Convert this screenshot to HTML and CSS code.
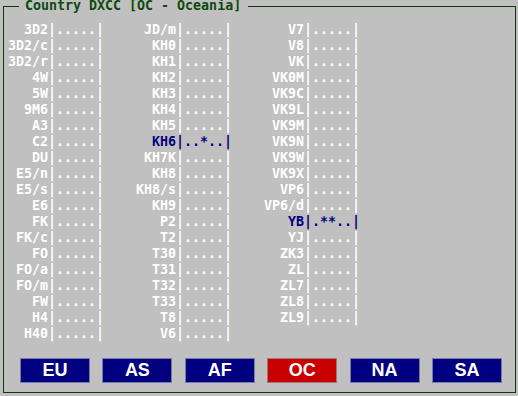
FILE: index.html
```html
<!DOCTYPE html>
<html>
<head>
<meta charset="utf-8">
<link rel="stylesheet" href="styles.css">
</head>
<body>
<fieldset class="panel">
  <legend class="title">Country DXCC [OC - Oceania]</legend>
  <div class="grid">
    <div class="col first">
      <div class="row"><span class="call">3D2</span><span class="bars">|.....|</span></div>
      <div class="row"><span class="call">3D2/c</span><span class="bars">|.....|</span></div>
      <div class="row"><span class="call">3D2/r</span><span class="bars">|.....|</span></div>
      <div class="row"><span class="call">4W</span><span class="bars">|.....|</span></div>
      <div class="row"><span class="call">5W</span><span class="bars">|.....|</span></div>
      <div class="row"><span class="call">9M6</span><span class="bars">|.....|</span></div>
      <div class="row"><span class="call">A3</span><span class="bars">|.....|</span></div>
      <div class="row"><span class="call">C2</span><span class="bars">|.....|</span></div>
      <div class="row"><span class="call">DU</span><span class="bars">|.....|</span></div>
      <div class="row"><span class="call">E5/n</span><span class="bars">|.....|</span></div>
      <div class="row"><span class="call">E5/s</span><span class="bars">|.....|</span></div>
      <div class="row"><span class="call">E6</span><span class="bars">|.....|</span></div>
      <div class="row"><span class="call">FK</span><span class="bars">|.....|</span></div>
      <div class="row"><span class="call">FK/c</span><span class="bars">|.....|</span></div>
      <div class="row"><span class="call">FO</span><span class="bars">|.....|</span></div>
      <div class="row"><span class="call">FO/a</span><span class="bars">|.....|</span></div>
      <div class="row"><span class="call">FO/m</span><span class="bars">|.....|</span></div>
      <div class="row"><span class="call">FW</span><span class="bars">|.....|</span></div>
      <div class="row"><span class="call">H4</span><span class="bars">|.....|</span></div>
      <div class="row"><span class="call">H40</span><span class="bars">|.....|</span></div>
    </div>
    <div class="col">
      <div class="row"><span class="call">JD/m</span><span class="bars">|.....|</span></div>
      <div class="row"><span class="call">KH0</span><span class="bars">|.....|</span></div>
      <div class="row"><span class="call">KH1</span><span class="bars">|.....|</span></div>
      <div class="row"><span class="call">KH2</span><span class="bars">|.....|</span></div>
      <div class="row"><span class="call">KH3</span><span class="bars">|.....|</span></div>
      <div class="row"><span class="call">KH4</span><span class="bars">|.....|</span></div>
      <div class="row"><span class="call">KH5</span><span class="bars">|.....|</span></div>
      <div class="row hit"><span class="call">KH6</span><span class="bars">|..*..|</span></div>
      <div class="row"><span class="call">KH7K</span><span class="bars">|.....|</span></div>
      <div class="row"><span class="call">KH8</span><span class="bars">|.....|</span></div>
      <div class="row"><span class="call">KH8/s</span><span class="bars">|.....|</span></div>
      <div class="row"><span class="call">KH9</span><span class="bars">|.....|</span></div>
      <div class="row"><span class="call">P2</span><span class="bars">|.....|</span></div>
      <div class="row"><span class="call">T2</span><span class="bars">|.....|</span></div>
      <div class="row"><span class="call">T30</span><span class="bars">|.....|</span></div>
      <div class="row"><span class="call">T31</span><span class="bars">|.....|</span></div>
      <div class="row"><span class="call">T32</span><span class="bars">|.....|</span></div>
      <div class="row"><span class="call">T33</span><span class="bars">|.....|</span></div>
      <div class="row"><span class="call">T8</span><span class="bars">|.....|</span></div>
      <div class="row"><span class="call">V6</span><span class="bars">|.....|</span></div>
    </div>
    <div class="col">
      <div class="row"><span class="call">V7</span><span class="bars">|.....|</span></div>
      <div class="row"><span class="call">V8</span><span class="bars">|.....|</span></div>
      <div class="row"><span class="call">VK</span><span class="bars">|.....|</span></div>
      <div class="row"><span class="call">VK0M</span><span class="bars">|.....|</span></div>
      <div class="row"><span class="call">VK9C</span><span class="bars">|.....|</span></div>
      <div class="row"><span class="call">VK9L</span><span class="bars">|.....|</span></div>
      <div class="row"><span class="call">VK9M</span><span class="bars">|.....|</span></div>
      <div class="row"><span class="call">VK9N</span><span class="bars">|.....|</span></div>
      <div class="row"><span class="call">VK9W</span><span class="bars">|.....|</span></div>
      <div class="row"><span class="call">VK9X</span><span class="bars">|.....|</span></div>
      <div class="row"><span class="call">VP6</span><span class="bars">|.....|</span></div>
      <div class="row"><span class="call">VP6/d</span><span class="bars">|.....|</span></div>
      <div class="row hit"><span class="call">YB</span><span class="bars">|.**..|</span></div>
      <div class="row"><span class="call">YJ</span><span class="bars">|.....|</span></div>
      <div class="row"><span class="call">ZK3</span><span class="bars">|.....|</span></div>
      <div class="row"><span class="call">ZL</span><span class="bars">|.....|</span></div>
      <div class="row"><span class="call">ZL7</span><span class="bars">|.....|</span></div>
      <div class="row"><span class="call">ZL8</span><span class="bars">|.....|</span></div>
      <div class="row"><span class="call">ZL9</span><span class="bars">|.....|</span></div>
    </div>
  </div>
  <div class="buttons">
    <button class="cont">EU</button>
    <button class="cont">AS</button>
    <button class="cont">AF</button>
    <button class="cont active">OC</button>
    <button class="cont">NA</button>
    <button class="cont">SA</button>
  </div>
</fieldset>
</body>
</html>
```

FILE: styles.css
```css
html, body {
  margin: 0;
  padding: 0;
  background: #c0c0c0;
  width: 518px;
  height: 396px;
  overflow: hidden;
}

.panel {
  box-sizing: border-box;
  margin: 0 0 0 3px;
  width: 513px;
  height: 393px;
  padding: 10px 0 0 4px;
  border: 1px solid #0e3a0e;
  min-width: 0;
}

.title {
  margin-left: 11px;
  padding: 0 7px 0 6px;
  font-family: "DejaVu Sans Mono", monospace;
  font-weight: bold;
  font-size: 13.3px;
  line-height: 12px;
  color: #0e4a0e;
}

.grid {
  display: flex;
  font-family: "DejaVu Sans Mono", monospace;
  font-weight: bold;
  font-size: 13.3px;
  line-height: 16px;
  color: #ffffff;
}

.col {
  display: flex;
  flex-direction: column;
}

.row {
  display: flex;
  white-space: pre;
  height: 16px;
}

.call {
  width: 72px;
  text-align: right;
}

.first .call {
  width: 40px;
}

.bars {
  width: 56px;
}

.hit {
  color: #000080;
}

.buttons {
  display: flex;
  justify-content: space-between;
  margin: 16px 13px 0 12px;
}

.cont {
  box-sizing: border-box;
  width: 70px;
  height: 25px;
  padding: 0;
  margin: 0;
  border: 1px solid #7a7aa6;
  background: #000080;
  color: #ffffff;
  font-family: "Liberation Sans", Arial, sans-serif;
  font-weight: bold;
  font-size: 18px;
  line-height: 23px;
}

.cont.active {
  background: #c80000;
  border-color: #a07878;
}
```
